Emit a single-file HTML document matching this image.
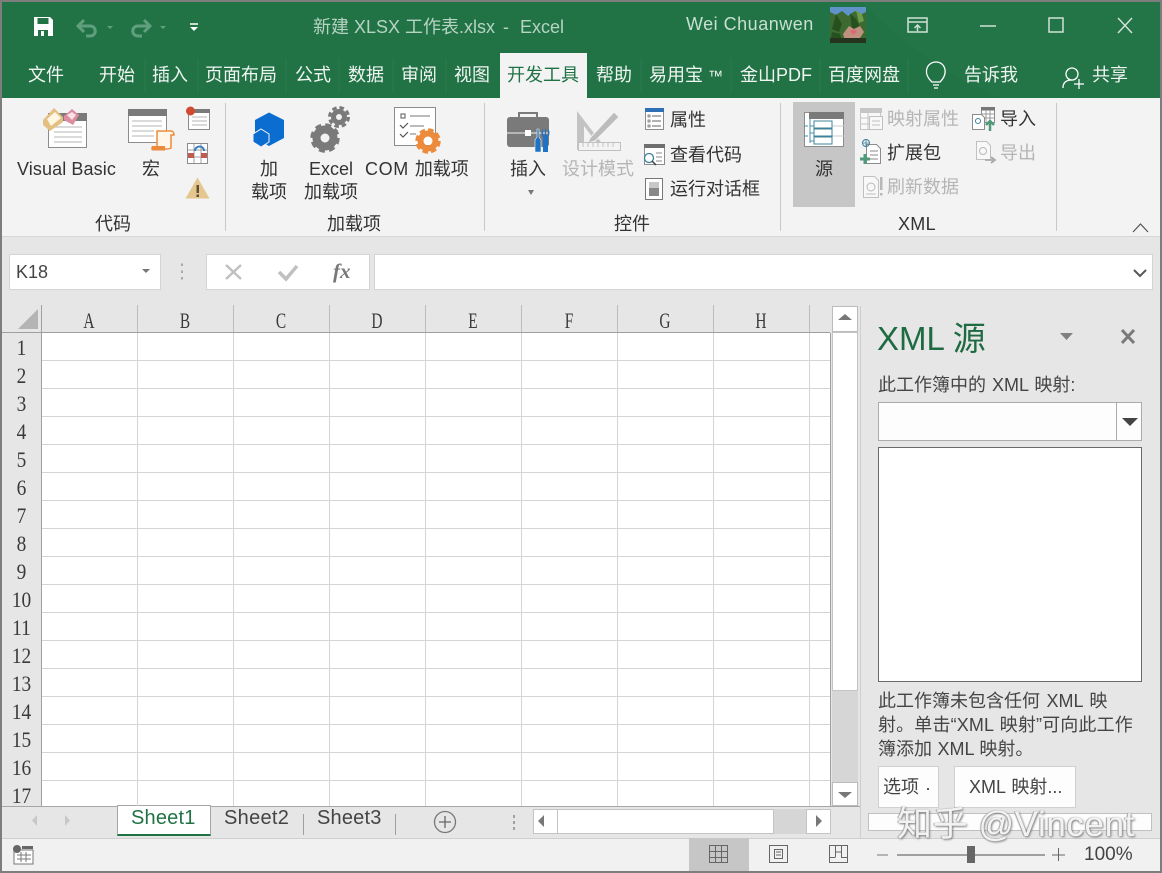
<!DOCTYPE html>
<html lang="zh"><head><meta charset="utf-8"><title>Excel</title>
<style>
html,body{margin:0;padding:0;background:#e6e6e6}
#p{position:relative;width:1162px;height:873px;overflow:hidden;background:#e6e6e6;font-family:"Liberation Sans","Noto Sans CJK SC",sans-serif;font-size:18px;color:#3a3a3a}
.b{position:absolute;box-sizing:border-box}
.t{position:absolute;white-space:nowrap;line-height:24px;height:24px}
.w{color:#fff}
.tb{color:#f0f5f2}
.r{color:#333}
.g{color:#b5b5b5}
.hd{font-family:"Liberation Serif","Noto Serif CJK SC",serif;color:#3a3a3a;font-size:22px;text-align:center;width:96px;top:309px;transform:scaleX(.7)}
.rn{font-family:"Liberation Serif","Noto Serif CJK SC",serif;color:#3a3a3a;font-size:22px;text-align:center;width:39px;left:2px;transform:scaleX(.88)}
svg{position:absolute;left:0;top:0}
</style></head><body><div id="p">
<div class="b" style="left:0;top:0;width:1162px;height:98px;background:#217346"></div>
<div class="b" style="left:0;top:98px;width:1162px;height:139px;background:#f3f3f3;border-bottom:1px solid #d6d6d6"></div>
<div class="b" style="left:500px;top:53px;width:87px;height:45px;background:#f3f3f3"></div>
<div class="b" style="left:793px;top:102px;width:62px;height:105px;background:#c6c6c6"></div>
<div class="b" style="left:9px;top:254px;width:152px;height:36px;background:#fff;border:1px solid #d4d4d4"></div>
<div class="b" style="left:206px;top:254px;width:164px;height:36px;background:#fff;border:1px solid #d4d4d4"></div>
<div class="b" style="left:374px;top:254px;width:779px;height:36px;background:#fff;border:1px solid #d4d4d4"></div>
<div class="b" style="left:41px;top:333px;width:789px;height:473px;background:#fff"></div>
<div class="b" style="left:832px;top:306px;width:26px;height:500px;background:#d6d6d6"></div>
<div class="b" style="left:832px;top:306px;width:26px;height:26px;background:#fff;border:1px solid #bbb"></div>
<div class="b" style="left:832px;top:332px;width:26px;height:359px;background:#fff;border:1px solid #c4c4c4"></div>
<div class="b" style="left:832px;top:782px;width:26px;height:24px;background:#fff;border:1px solid #bbb"></div>
<div class="b" style="left:0;top:806px;width:860px;height:33px;background:#e6e6e6;border-top:1px solid #a6a6a6"></div>
<div class="b" style="left:117px;top:805px;width:94px;height:31px;background:#fff;border:1px solid #a6a6a6;border-bottom:2px solid #217346"></div>
<div class="b" style="left:533px;top:809px;width:298px;height:25px;background:#d6d6d6"></div>
<div class="b" style="left:533px;top:809px;width:25px;height:25px;background:#fff;border:1px solid #c4c4c4"></div>
<div class="b" style="left:557px;top:809px;width:217px;height:25px;background:#fff;border:1px solid #c4c4c4"></div>
<div class="b" style="left:806px;top:809px;width:25px;height:25px;background:#fff;border:1px solid #c4c4c4"></div>
<div class="b" style="left:0;top:838px;width:1162px;height:33px;background:#f1f1f1;border-top:1px solid #cfcfcf"></div>
<div class="b" style="left:689px;top:838px;width:60px;height:33px;background:#c6c6c6"></div>
<div class="b" style="left:878px;top:402px;width:264px;height:39px;background:#fdfdfd;border:1px solid #ababab"></div>
<div class="b" style="left:1116px;top:402px;width:1px;height:39px;background:#ababab"></div>
<div class="b" style="left:878px;top:447px;width:264px;height:235px;background:#fff;border:1px solid #6a6a6a"></div>
<div class="b" style="left:878px;top:766px;width:61px;height:42px;background:#fdfdfd;border:1px solid #d0d0d0"></div>
<div class="b" style="left:954px;top:766px;width:122px;height:42px;background:#fdfdfd;border:1px solid #d0d0d0"></div>
<div class="b" style="left:868px;top:813px;width:284px;height:18px;background:#fdfdfd;border:1px solid #c0c0c0"></div>
<div class="b" style="left:0;top:0;width:1162px;height:873px;border:2px solid #7d7d7d;z-index:5"></div>

<svg width="1162" height="873" viewBox="0 0 1162 873">
<!-- title decoration -->
<path d="M860 2h300v96H1000c-50-20-90-50-140-96z" fill="#2a7a4e" opacity=".18"/>
<!-- tab separators -->
<g stroke="#2b7a4e" stroke-width="1"><path d="M145 58v35M198 58v35M286 58v35M339 58v35M393 58v35M446 58v35M641 58v35M731 58v35M820 58v35M908 58v35"/></g>
<!-- save -->
<path d="M34 17h16l3 3v16H34z" fill="#fff"/><path d="M37.500 18h11v6h-11z" fill="#217346"/><path d="M38 30h10v6H38z" fill="#217346"/><path d="M41 31h3v5h-3z" fill="#fff"/>
<!-- undo/redo -->
<g fill="none" stroke="#5f9f7d" stroke-width="3"><path d="M78 26h12c7 0 7 10 0 10h-4"/><path d="M84 20l-6 6 6 6"/><path d="M150 26h-12c-7 0-7 10 0 10h4"/><path d="M144 20l6 6-6 6"/></g>
<path d="M107 26h6l-3 3zM160 26h6l-3 3z" fill="#5f9f7d"/>
<path d="M190 24h8" stroke="#fff" stroke-width="1.500"/><path d="M190 27h8l-4 4z" fill="#fff"/>
<!-- avatar -->
<rect x="830" y="7" width="36" height="36" fill="#3c6a30"/><path d="M830 7h36v5l-6 3-5-4-7 5-6-5-6 4-6-3z" fill="#5f93c9"/><path d="M836 14l6 10-3 8-7-3zM850 13l6 6 4 8-8 2zM832 32l8 2 3 9h-13z" fill="#27501f"/><path d="M843 34l6-8 5 3 6-3 4 6-4 6-8 4-7-2z" fill="#c0917f"/><path d="M850 31l4-2 3 3-4 3z" fill="#d86a78"/><path d="M830 38h36v5h-36z" fill="#26331e"/><path d="M856 10l6 4 2 7-5 2z" fill="#6d9c4d"/>
<!-- window btns -->
<g fill="none" stroke="#cfe2d7" stroke-width="1.500"><rect x="908" y="18" width="19" height="14"/><path d="M908 22h19M917.500 31v-6M914.500 28l3-3 3 3"/><path d="M980 26h16"/><rect x="1049" y="18" width="14" height="14"/><path d="M1118 18l14 15M1132 18l-14 15"/></g>
<!-- lightbulb, person -->
<g fill="none" stroke="#fff" stroke-width="1.300"><path d="M932 82c-10-9-5-20 4-20s13 11 4 20z"/><path d="M933 85h6M934 88h4"/><circle cx="1072" cy="74" r="6"/><path d="M1063 88c0-6 4-8 9-8"/><path d="M1074 84h10M1079 79v10"/></g>
<!-- ribbon separators -->
<g stroke="#c8c8c8"><path d="M225.500 103v128M484.500 103v128M780.500 103v128M1056.500 103v128"/></g>
<!-- VB -->
<rect x="48.500" y="117.500" width="38" height="30" fill="#fff" stroke="#8c8c8c"/><rect x="48" y="113" width="39" height="8" fill="#7a7a7a"/><path d="M54 127h28M54 132h28M54 137h28M54 142h28" stroke="#b5b5b5"/>
<path d="M43 120l11-12 9 9v5l-13 9-7-6z" fill="#e3c082"/><path d="M47 119l8-7 6 6-10 8z" fill="#fff6e3"/>
<path d="M64 116l8-7 7 6-6 10-9-5z" fill="#dc8da0"/><path d="M67 115l5-3 4 3-4 5z" fill="#f9e1e6"/>
<!-- macro -->
<rect x="128.500" y="113.500" width="38" height="29" fill="#fff" stroke="#8c8c8c"/><rect x="128" y="109" width="39" height="7" fill="#7a7a7a"/><path d="M132 121h30M132 126h30M132 131h22M132 136h22" stroke="#b5b5b5"/>
<path d="M157 131h14c2 0 3 2 3 4h-3v13c-4 2-10 1-14 0z" fill="#fff7ea" stroke="#ed8b3d" stroke-width="1.500"/><path d="M152 146h13v4.500h-13c-1-1-1-3 0-4.500z" fill="#ed8b3d"/>
<!-- small code -->
<rect x="188.500" y="109.500" width="21" height="20" fill="#fff" stroke="#8c8c8c"/><rect x="188" y="109" width="22" height="4" fill="#7a7a7a"/><path d="M192 117h15M192 121h15M192 125h15" stroke="#b5b5b5"/><circle cx="190.500" cy="111" r="4.500" fill="#d34a33"/>
<rect x="187.500" y="143.500" width="20" height="20" fill="#fff" stroke="#8c8c8c"/><path d="M194 144v19M201 144v19M188 150h19M188 157h19" stroke="#a0a0a0"/><rect x="188" y="153" width="6" height="5" fill="#c25a50"/><rect x="201" y="153" width="6" height="5" fill="#c25a50"/><path d="M195 151c0-6 9-6 9 0" fill="none" stroke="#3c7fc0" stroke-width="2"/>
<path d="M197.500 177.500l12 21h-24z" fill="#e5c68e"/><path d="M196.500 185h2.500v8h-2.500zM196.500 194.500h2.500v2.500h-2.500z" fill="#5d5030"/>
<!-- add-in hex -->
<path d="M255 120l14-7.500 15 7.500v18l-15 8-14-8z" fill="#0a6dcf"/><path d="M253 134l8-5 8 5v8l-8 5-8-5z" fill="#0a6dcf" stroke="#f3f3f3" stroke-width="1"/>
<!-- gears -->
<g fill="none" stroke="#7a7a7a"><circle cx="325" cy="138" r="8.500" stroke-width="8"/><circle cx="325" cy="138" r="13" stroke-width="3.500" stroke-dasharray="6 4.200"/><circle cx="339" cy="117" r="5.500" stroke-width="5"/><circle cx="339" cy="117" r="9.500" stroke-width="3" stroke-dasharray="4.500 3"/></g>
<!-- COM -->
<rect x="394.500" y="107.500" width="41" height="38" fill="#fff" stroke="#8c8c8c"/><rect x="401" y="114" width="4" height="4" fill="none" stroke="#555"/><path d="M410 116h20M410 126h14M410 134h6" stroke="#777"/><path d="M400 125l3 3 5-5M400 134l3 3 5-5" fill="none" stroke="#555" stroke-width="1.200"/>
<g fill="none" stroke="#ed8b3d"><circle cx="428" cy="141" r="7.500" stroke-width="6"/><circle cx="428" cy="141" r="11" stroke-width="3.500" stroke-dasharray="5.500 3.100"/></g>
<!-- toolbox -->
<path d="M519 117v-4h18v4" fill="none" stroke="#7a7a7a" stroke-width="2"/><rect x="507" y="117" width="42" height="30" rx="3" fill="#7a7a7a"/><path d="M507 133h42" stroke="#f3f3f3"/><rect x="525" y="130" width="6" height="6" fill="#fff"/>
<path d="M537 129h2v8l2 3v12h-6v-12l2-3z" fill="#1e73c4" stroke="#f3f3f3" stroke-width=".6"/><path d="M545 129v6h-2v-6c-2 1-2 6 0 8v15h5v-15c2-2 2-7 0-8v6h-2v-6z" fill="#1e73c4"/>
<path d="M531 195l-3-5h6z" fill="#777"/>
<!-- design -->
<path d="M577 111l30 39h-30zM584 126v16h12z" fill="#c3c3c3" fill-rule="evenodd"/><path d="M590 138l24-26 5 5-24 24-7 2z" fill="#bcbcbc" stroke="#f3f3f3"/><rect x="578.500" y="142.500" width="42" height="8" fill="#f3f3f3" stroke="#c0c0c0"/><path d="M583 143v4M588 143v4M593 143v4M598 143v4M603 143v4M608 143v4M613 143v4" stroke="#c0c0c0"/>
<!-- props -->
<rect x="645.500" y="108.500" width="18" height="21" fill="#fff" stroke="#8c8c8c"/><rect x="645" y="108" width="19" height="4" fill="#2f6fb5"/><path d="M652 116h9M652 121h9M652 126h9" stroke="#666"/><path d="M648 115h2v2h-2zM648 120h2v2h-2zM648 125h2v2h-2z" fill="none" stroke="#666" stroke-width=".8"/>
<rect x="644.500" y="144.500" width="20" height="20" fill="#fff" stroke="#8c8c8c"/><rect x="644" y="144" width="21" height="4" fill="#6f6f6f"/><path d="M656 153h6M656 157h6M656 161h6" stroke="#888"/><circle cx="649" cy="158" r="4.500" fill="#fff" stroke="#3f7f9c" stroke-width="1.300"/><path d="M652 161l4 4" stroke="#3f3f3f" stroke-width="1.500"/>
<rect x="645.500" y="178.500" width="17" height="21" fill="#fff" stroke="#777"/><rect x="649" y="182" width="10" height="14" fill="#c8c8c8"/><rect x="649" y="188" width="10" height="8" fill="#888"/>
<!-- source -->
<rect x="804.500" y="112.500" width="39" height="34" fill="#fff" stroke="#8c8c8c"/><rect x="809" y="112" width="35" height="7" fill="#7a7a7a"/><path d="M826 126h18M826 136h18" stroke="#ccc"/><path d="M810 118v25M810 126h4M810 133h4M810 141h4M804 126h4M804 136h4" stroke="#4d8fa8"/><rect x="814" y="121" width="18" height="7" fill="#fff" stroke="#3f8399"/><rect x="814" y="129" width="18" height="7" fill="#fff" stroke="#3f8399"/><rect x="814" y="137" width="18" height="7" fill="#fff" stroke="#3f8399"/>
<!-- map props -->
<rect x="860.500" y="111.500" width="20" height="18" fill="#f8f8f8" stroke="#c5c5c5"/><rect x="860" y="108" width="22" height="5" fill="#c5c5c5"/><path d="M860 118h10M860 124h10M868 112v18" stroke="#c5c5c5"/><rect x="869.500" y="116.500" width="13" height="13" fill="#f8f8f8" stroke="#c0c0c0"/><path d="M872 121h8M872 125h8" stroke="#c0c0c0"/>
<!-- expansion pack -->
<path d="M866.500 144.500h10l4 4v15h-14z" fill="#fff" stroke="#8c8c8c"/><path d="M870 151h8M870 155h8M870 159h8" stroke="#888"/><circle cx="866" cy="143" r="3.500" fill="none" stroke="#3f7f9c"/><path d="M866 139.500v7M862.500 143h7" stroke="#3f7f9c" stroke-width=".8"/><path d="M860 159h10M865 154v10" stroke="#4f9a78" stroke-width="3"/>
<!-- refresh -->
<path d="M863.500 176.500h11l4 4v17h-15z" fill="#f8f8f8" stroke="#c0c0c0"/><circle cx="871" cy="187" r="4" fill="none" stroke="#b8b8b8"/><path d="M866 194h10" stroke="#c0c0c0"/><path d="M880 177h2.500v13H880zM880 193h2.500v2.500H880z" fill="#b8b8b8"/>
<!-- import -->
<rect x="981.500" y="108.500" width="13" height="14" fill="#fff" stroke="#8c8c8c"/><rect x="981" y="107" width="14" height="3.500" fill="#777"/><path d="M986 110v12M990 110v12M981 114h13M981 118h13" stroke="#999"/><path d="M972.500 114.500h9l3 3v12h-12z" fill="#fff" stroke="#8c8c8c"/><circle cx="978" cy="121" r="2.500" fill="none" stroke="#3f7f9c"/><path d="M990 131v-10M986 125l4-4 4 4" fill="none" stroke="#4f9a78" stroke-width="2.500"/>
<!-- export -->
<path d="M976.500 141.500h10l4 4v14h-14z" fill="#f8f8f8" stroke="#c0c0c0"/><circle cx="983" cy="151" r="3.500" fill="none" stroke="#b8b8b8"/><path d="M985 160h8M991 157l4 3-4 3" fill="none" stroke="#aaa" stroke-width="1.800"/>
<!-- collapse -->
<path d="M1133 232l7.500-8 7.500 8" fill="none" stroke="#555" stroke-width="1.200"/>
<!-- formula bar -->
<path d="M142 269h8l-4 4z" fill="#777"/><path d="M182 263.500v2.500M182 270.500v2.500M182 277v2.500" stroke="#a8a8a8" stroke-width="2"/>
<path d="M226 265l15 14M241 265l-15 14" stroke="#c0c0c0" stroke-width="2.500"/><path d="M279 272l7 7 11-13" fill="none" stroke="#c0c0c0" stroke-width="3.500"/>
<path d="M1134 270l6 6 6-6" fill="none" stroke="#555" stroke-width="2"/>
<!-- grid -->
<g stroke="#d4d4d4"><path d="M41 360.500h789M41 388.500h789M41 416.500h789M41 444.500h789M41 472.500h789M41 500.500h789M41 528.500h789M41 556.500h789M41 584.500h789M41 612.500h789M41 640.500h789M41 668.500h789M41 696.500h789M41 724.500h789M41 752.500h789M41 780.500h789"/><path d="M137.500 333v473M233.500 333v473M329.500 333v473M425.500 333v473M521.500 333v473M617.500 333v473M713.500 333v473M809.500 333v473"/></g>
<g stroke="#bcbcbc"><path d="M137.500 305v28M233.500 305v28M329.500 305v28M425.500 305v28M521.500 305v28M617.500 305v28M713.500 305v28M809.500 305v28"/></g>
<path d="M2 332.500h828M41.500 305v501M830.500 333v473" stroke="#9f9f9f"/>
<path d="M18 329l20-20v20z" fill="#b4b4b4"/>
<g fill="#777"><path d="M845 314l7 6h-14zM845 798l7-6h-14zM544 815v12l-6-6zM816 815v12l6-6z"/></g>
<path d="M860.500 306v532" stroke="#cfcfcf"/>
<!-- sheet nav -->
<path d="M37 815v11l-5-5.500zM65 815v11l5-5.500z" fill="#c8c8c8"/>
<path d="M303.500 814v21M395.500 814v21" stroke="#9f9f9f"/>
<circle cx="445" cy="822" r="10.500" fill="none" stroke="#777" stroke-width="1.300"/><path d="M439 822h12M445 816v12" stroke="#666" stroke-width="1.300"/>
<path d="M514 815v3M514 821v3M514 827v3" stroke="#a0a0a0" stroke-width="2"/>
<!-- pane -->
<path d="M1060 333h13l-6.500 7z" fill="#808080"/><path d="M1122 330l12 13M1134 330l-12 13" stroke="#7a7a7a" stroke-width="3"/>
<path d="M1122 418h16l-8 8z" fill="#444"/>
<path d="M927 788h2v2h-2z" fill="#555"/>
<!-- status -->
<rect x="14" y="850" width="19" height="14" fill="#fff" stroke="#777"/><rect x="22" y="846" width="11" height="3" fill="#666"/><circle cx="17" cy="849" r="4" fill="#666"/><path d="M17 855h14M17 859h14M21 852v10M26 852v10" stroke="#777"/>
<rect x="709.500" y="845.500" width="18" height="17" fill="none" stroke="#666"/><path d="M715.500 845v18M721.500 845v18M709 851.500h18M709 857.500h18" stroke="#666"/>
<rect x="769.500" y="845.500" width="18" height="17" fill="none" stroke="#666"/><rect x="774.500" y="849.500" width="8" height="9" fill="none" stroke="#666"/><path d="M776 852h5M776 855h5" stroke="#666"/>
<rect x="829.500" y="845.500" width="18" height="17" fill="none" stroke="#666"/><path d="M829 857.500h6M847 857.500h-6M835.500 857.500v-12M841.500 857.500v-12M835 852h6" stroke="#666"/>
<path d="M877 855h11" stroke="#777"/><path d="M897 855h148" stroke="#a0a0a0" stroke-width="2"/><path d="M1052 855h13M1058.500 848v13" stroke="#666"/><rect x="967" y="846" width="8" height="17" fill="#666"/>
</svg>

<!-- title -->
<div class="t" style="left:313px;top:15px;color:#b6d3c3;font-size:18px">新建 XLSX 工作表.xlsx</div>
<div class="t" style="left:503px;top:15px;color:#b6d3c3;font-size:18px">-</div>
<div class="t" style="left:520px;top:15px;color:#b6d3c3;font-size:18px">Excel</div>
<div class="t" style="left:686px;top:12px;color:#c9dfd2;font-size:18px;letter-spacing:.5px">Wei Chuanwen</div>
<!-- tabs -->
<div class="t tb" style="left:28px;top:63px">文件</div>
<div class="t tb" style="left:99px;top:63px">开始</div>
<div class="t tb" style="left:152px;top:63px">插入</div>
<div class="t tb" style="left:205px;top:63px">页面布局</div>
<div class="t tb" style="left:295px;top:63px">公式</div>
<div class="t tb" style="left:348px;top:63px">数据</div>
<div class="t tb" style="left:401px;top:63px">审阅</div>
<div class="t tb" style="left:454px;top:63px">视图</div>
<div class="t" style="left:507px;top:63px;color:#217346">开发工具</div>
<div class="t tb" style="left:596px;top:63px">帮助</div>
<div class="t tb" style="left:649px;top:63px">易用宝 <span style="font-size:15px">™</span></div>
<div class="t tb" style="left:740px;top:63px">金山PDF</div>
<div class="t tb" style="left:828px;top:63px">百度网盘</div>
<div class="t tb" style="left:964px;top:63px">告诉我</div>
<div class="t tb" style="left:1092px;top:63px">共享</div>
<!-- ribbon labels -->
<div class="t r" style="left:17px;top:157px;letter-spacing:.1px">Visual Basic</div>
<div class="t r" style="left:142px;top:157px">宏</div>
<div class="t r" style="left:260px;top:157px">加</div>
<div class="t r" style="left:251px;top:180px">载项</div>
<div class="t r" style="left:309px;top:157px">Excel</div>
<div class="t r" style="left:304px;top:180px">加载项</div>
<div class="t r" style="left:365px;top:157px"><span style="letter-spacing:.6px">COM</span> <span style="margin-left:1px">加载项</span></div>
<div class="t r" style="left:510px;top:157px">插入</div>
<div class="t g" style="left:562px;top:157px">设计模式</div>
<div class="t r" style="left:670px;top:108px">属性</div>
<div class="t r" style="left:670px;top:143px">查看代码</div>
<div class="t r" style="left:670px;top:177px">运行对话框</div>
<div class="t r" style="left:815px;top:157px">源</div>
<div class="t g" style="left:887px;top:107px">映射属性</div>
<div class="t r" style="left:887px;top:141px">扩展包</div>
<div class="t g" style="left:887px;top:175px">刷新数据</div>
<div class="t r" style="left:1000px;top:107px">导入</div>
<div class="t g" style="left:1000px;top:141px">导出</div>
<div class="t r" style="left:95px;top:212px">代码</div>
<div class="t r" style="left:327px;top:212px">加载项</div>
<div class="t r" style="left:614px;top:212px">控件</div>
<div class="t r" style="left:898px;top:212px;letter-spacing:.3px">XML</div>
<!-- formula -->
<div class="t" style="left:16px;top:260px;color:#444">K18</div>
<div class="t" style="left:333px;top:259px;font-family:'Liberation Serif',serif;font-style:italic;font-weight:bold;font-size:21px;color:#777">fx</div>
<!-- headers -->
<div class="t hd" style="left:41px">A</div><div class="t hd" style="left:137px">B</div><div class="t hd" style="left:233px">C</div><div class="t hd" style="left:329px">D</div><div class="t hd" style="left:425px">E</div><div class="t hd" style="left:521px">F</div><div class="t hd" style="left:617px">G</div><div class="t hd" style="left:713px">H</div>
<div class="t rn" style="top:336px">1</div><div class="t rn" style="top:364px">2</div><div class="t rn" style="top:392px">3</div><div class="t rn" style="top:420px">4</div><div class="t rn" style="top:448px">5</div><div class="t rn" style="top:476px">6</div><div class="t rn" style="top:504px">7</div><div class="t rn" style="top:532px">8</div><div class="t rn" style="top:560px">9</div><div class="t rn" style="top:588px">10</div><div class="t rn" style="top:616px">11</div><div class="t rn" style="top:644px">12</div><div class="t rn" style="top:672px">13</div><div class="t rn" style="top:700px">14</div><div class="t rn" style="top:728px">15</div><div class="t rn" style="top:756px">16</div><div class="t rn" style="top:784px;height:21px;overflow:hidden">17</div>
<!-- sheets -->
<div class="t" style="left:131px;top:806px;color:#217346;font-size:20px;letter-spacing:.2px">Sheet1</div>
<div class="t" style="left:224px;top:806px;font-size:20px;letter-spacing:.3px;color:#444">Sheet2</div>
<div class="t" style="left:317px;top:806px;font-size:20px;letter-spacing:.2px;color:#444">Sheet3</div>
<!-- pane -->
<div class="t" style="left:877px;top:320px;height:38px;line-height:38px;font-size:33px;color:#1f6b41">XML 源</div>
<div class="t" style="left:878px;top:373px;color:#444;word-spacing:1px">此工作簿中的 XML 映射:</div>
<div class="t" style="left:878px;top:689px;color:#444;word-spacing:1.500px">此工作簿未包含任何 XML 映</div>
<div class="t" style="left:878px;top:713px;color:#444;word-spacing:1px"><span style="letter-spacing:.15px">射。单击“XML 映射”可向此工作</span></div>
<div class="t" style="left:878px;top:737px;color:#444;word-spacing:.5px">簿添加 XML 映射。</div>
<div class="t" style="left:883px;top:775px;color:#444">选项</div>
<div class="t" style="left:969px;top:775px;color:#444;word-spacing:1px">XML 映射...</div>
<!-- status -->
<div class="t" style="left:1084px;top:843px;color:#444;font-size:19px">100%</div>
<!-- watermark -->
<div class="t" style="left:897px;top:805px;height:40px;line-height:40px;font-size:35px;letter-spacing:.6px;color:#f2f2f2;text-shadow:1px 1px 2px #777,-1px 0 1px #a0a0a0;z-index:6">知乎 @Vincent</div>
</div></body></html>
